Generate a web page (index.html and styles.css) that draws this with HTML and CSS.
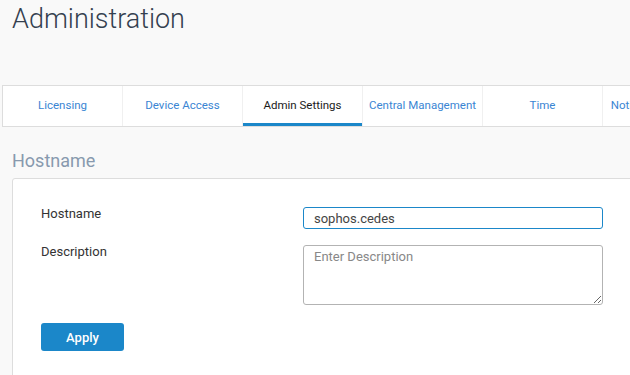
FILE: index.html
```html
<!DOCTYPE html>
<html lang="en">

<head>
    <meta charset="UTF-8">
    <title>Administration</title>
    <link rel="stylesheet" href="styles.css">
</head>

<body>
    <header>
        <h1>Administration</h1>
    </header>

    <nav class="tabs">
        <button>Licensing</button>
        <button>Device Access</button>
        <button class="active">Admin Settings</button>
        <button>Central Management</button>
        <button>Time</button>
        <button>Notification settings</button>
    </nav>

    <main>
        <!-- Hostname -->
        <section class="section">
            <h2>Hostname</h2>
            <div class="card">
                <div class="form-grid">
                    <label for="hostname">Hostname</label>
                    <input type="text" id="hostname" class="field focused" value="sophos.cedes">
                    <label for="description">Description</label>
                    <textarea id="description" class="field" placeholder="Enter Description"></textarea>
                </div>
                <button class="btn-primary">Apply</button>
            </div>
        </section>
    </main>
</body>

</html>
```

FILE: styles.css
```css
body {
    margin: 0;
    font-family: Roboto, "Liberation Sans", sans-serif;
    background: #f9f9f9;
    color: #333;
    overflow: hidden;
    height: 100vh;
}

header {
    padding: 3px 12px 0;
}

header h1 {
    margin: 0;
    font-size: 27px;
    line-height: 32px;
    font-weight: 300;
    color: #34404f;
}

/* Tabs */
.tabs {
    margin: 50px 0 0 2px;
    display: flex;
    width: 760px;
    background: white;
    border: 1px solid #ddd;
}

.tabs button {
    flex: none;
    width: 120px;
    height: 40px;
    padding: 0 0 2px;
    background: none;
    border: none;
    border-right: 1px solid #f0f0f0;
    font-family: inherit;
    font-size: 11.5px;
    color: #3a85d3;
    white-space: nowrap;
    cursor: pointer;
}

.tabs button.active {
    color: #1a1a1a;
    box-shadow: inset 0 -3px 0 #1b87c9;
}

/* Section */
.section {
    margin: 23px 0 0 12px;
}

.section h2 {
    margin: 0 0 6px;
    font-size: 18px;
    line-height: 22px;
    font-weight: 400;
    color: #8899ae;
}

.card {
    background: white;
    border: 1px solid #ddd;
    border-radius: 3px;
    margin-right: -20px;
    padding: 28px 28px 60px;
}

.form-grid {
    display: grid;
    grid-template-columns: 262px 300px;
    row-gap: 16px;
}

.form-grid label {
    font-size: 13px;
    line-height: 14px;
    color: #333;
}

.field {
    box-sizing: border-box;
    width: 300px;
    border: 1px solid #b3b3b3;
    border-radius: 3px;
    font-family: inherit;
    font-size: 13px;
    color: #444;
    outline: none;
    background: white;
}

input.field {
    height: 22px;
    padding: 0 10px;
}

input.field.focused {
    border-color: #1b87c9;
}

textarea.field {
    height: 60px;
    padding: 3px 10px;
    line-height: 16px;
    resize: both;
}

textarea.field::placeholder {
    color: #888;
}

.btn-primary {
    margin-top: 18px;
    width: 83px;
    height: 28px;
    border: none;
    border-radius: 3px;
    background: #1b87c9;
    color: white;
    font-family: inherit;
    font-size: 13px;
    font-weight: 500;
    cursor: pointer;
}
```
